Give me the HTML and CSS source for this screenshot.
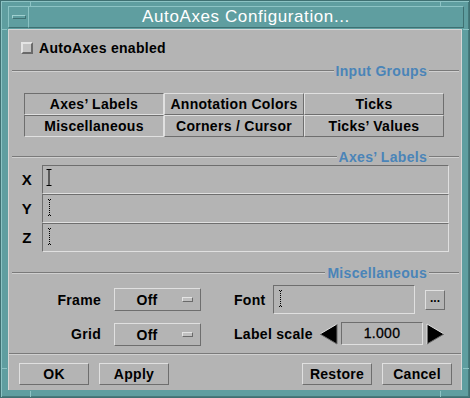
FILE: index.html
```html
<!DOCTYPE html>
<html>

<head>
    <meta charset="utf-8">
    <title>AutoAxes Configuration...</title>
    <link rel="stylesheet" href="styles.css">
</head>

<body>
    <div class="window">
        <span class="notch nt-l"></span>
        <span class="notch nt-r"></span>
        <span class="notch nb-l"></span>
        <span class="notch nb-r"></span>
        <span class="notch-h nl-t"></span>
        <span class="notch-h nr-t"></span>
        <span class="notch-h nl-b"></span>
        <span class="notch-h nr-b"></span>

        <div class="titlebar">
            <div class="menu-btn"><span></span></div>
            <div class="title">AutoAxes Configuration...</div>
        </div>

        <div class="body">
            <div class="main">
                <div class="check"><span class="box"></span>AutoAxes enabled</div>

                <div class="group-head"><span class="rule"></span><span class="caption">Input Groups</span><span class="rule end"></span></div>

                <div class="tabs">
                    <div class="tab sunk">Axes’ Labels</div>
                    <div class="tab">Annotation Colors</div>
                    <div class="tab">Ticks</div>
                    <div class="tab sunk">Miscellaneous</div>
                    <div class="tab">Corners / Cursor</div>
                    <div class="tab">Ticks’ Values</div>
                </div>

                <div class="group-head"><span class="rule"></span><span class="caption">Axes’ Labels</span><span class="rule end"></span></div>

                <div class="fields">
                    <div class="field-row">
                        <span class="axis">X</span>
                        <div class="field">
                            <svg class="ibeam" width="6" height="17" viewBox="0 0 6 17">
                                <path d="M0.5 0.5h5M3 0.5v16M0.5 16.5h5" stroke="#000" stroke-width="1" fill="none" />
                            </svg>
                        </div>
                    </div>
                    <div class="field-row">
                        <span class="axis">Y</span>
                        <div class="field">
                            <svg class="dotbeam" width="5" height="17" viewBox="0 0 5 17">
                                <path d="M1 0.5h3M2.5 1v15M1 16.5h3" stroke="#000" stroke-width="1" stroke-dasharray="1 1" fill="none" />
                            </svg>
                        </div>
                    </div>
                    <div class="field-row">
                        <span class="axis">Z</span>
                        <div class="field">
                            <svg class="dotbeam" width="5" height="17" viewBox="0 0 5 17">
                                <path d="M1 0.5h3M2.5 1v15M1 16.5h3" stroke="#000" stroke-width="1" stroke-dasharray="1 1" fill="none" />
                            </svg>
                        </div>
                    </div>
                </div>

                <div class="group-head"><span class="rule"></span><span class="caption">Miscellaneous</span><span class="rule end"></span></div>

                <div class="misc-row first">
                    <span class="misc-label">Frame</span>
                    <div class="option"><span class="opt-text">Off</span><span class="opt-mark"></span></div>
                    <span class="label2 font-label">Font</span>
                    <div class="font-field">
                        <svg class="dotbeam" width="5" height="17" viewBox="0 0 5 17">
                            <path d="M1 0.5h3M2.5 1v15M1 16.5h3" stroke="#000" stroke-width="1" stroke-dasharray="1 1" fill="none" />
                        </svg>
                    </div>
                    <div class="dots">...</div>
                </div>

                <div class="misc-row second">
                    <span class="misc-label">Grid</span>
                    <div class="option"><span class="opt-text">Off</span><span class="opt-mark"></span></div>
                    <span class="label2 scale-label">Label scale</span>
                    <svg class="arrow" width="19" height="22" viewBox="0 0 19 22">
                        <polygon points="18,1 1,11 18,21" fill="#000" />
                        <path d="M18 1L1 11" stroke="#e2e2e2" stroke-width="1" fill="none" />
                        <path d="M1 11L18 21V1" stroke="#6a6a6a" stroke-width="1" fill="none" />
                    </svg>
                    <div class="scale-field">1.000</div>
                    <svg class="arrow" width="19" height="22" viewBox="0 0 19 22">
                        <polygon points="1,1 18,11 1,21" fill="#000" />
                        <path d="M1 21V1L18 11" stroke="#e2e2e2" stroke-width="1" fill="none" />
                        <path d="M18 11L1 21" stroke="#6a6a6a" stroke-width="1" fill="none" />
                    </svg>
                </div>
            </div>

            <div class="actions">
                <div class="left-btns">
                    <div class="button">OK</div>
                    <div class="button">Apply</div>
                </div>
                <div class="right-btns">
                    <div class="button">Restore</div>
                    <div class="button">Cancel</div>
                </div>
            </div>
        </div>
    </div>
</body>

</html>
```

FILE: styles.css
```css
* {
    margin: 0px;
    padding: 0px;
    box-sizing: border-box;
}

body {
    font-family: "Liberation Sans", Arial, sans-serif;
    background: #5f9ea0;
}

.window {
    position: relative;
    width: 470px;
    height: 398px;
    background: #5f9ea0;
    border: 1px solid #3f7072;
    box-shadow: inset 1px 1px 0 #8cc3c4, inset -1px -1px 0 #477a7c;
    padding: 5px 5px 7px 7px;
    display: flex;
    flex-direction: column;
}

/* little resize-handle marks in the frame */
.notch {
    position: absolute;
    width: 1px;
    height: 6px;
    background: #8cc3c4;
}

.nt-l { left: 29px; top: 0px; }
.nt-r { left: 439px; top: 0px; }
.nb-l { left: 29px; bottom: 0px; }
.nb-r { left: 439px; bottom: 0px; }

.notch-h {
    position: absolute;
    width: 6px;
    height: 1px;
    background: #8cc3c4;
}

.nl-t { left: 0px; top: 28px; }
.nr-t { right: 0px; top: 28px; }
.nl-b { left: 0px; top: 367px; }
.nr-b { right: 0px; top: 367px; }

.titlebar {
    display: flex;
    height: 22px;
    margin-bottom: 1px;
}

.menu-btn {
    width: 21px;
    height: 22px;
    border-top: 1px solid #8cc3c4;
    border-left: 1px solid #8cc3c4;
    border-right: 1px solid #8cc3c4;
    border-bottom: 1px solid #3f7072;
    display: flex;
    align-items: center;
    justify-content: center;
}

.menu-btn span {
    display: block;
    width: 14px;
    height: 4px;
    border-top: 1px solid #9fd0d0;
    border-left: 1px solid #9fd0d0;
    border-bottom: 1px solid #3f7072;
    border-right: 1px solid #3f7072;
}

.title {
    flex: 1;
    border-top: 1px solid #8cc3c4;
    border-bottom: 1px solid #3f7072;
    border-right: 1px solid #3f7072;
    color: #ffffff;
    font-size: 17px;
    line-height: 20px;
    text-align: center;
    letter-spacing: 0.6px;
}

.body {
    flex: 1;
    margin-right: 2px;
    background: #b4b4b4;
    border-left: 1px solid #d6d6d6;
    border-top: 1px solid #d6d6d6;
    border-right: 1px solid #d6d6d6;
    display: flex;
    flex-direction: column;
    font-weight: bold;
    font-size: 14px;
    letter-spacing: 0.3px;
    color: #000;
}

.main {
    flex: 1;
    padding: 0px 2px 0px 3px;
}

.check {
    display: flex;
    align-items: center;
    height: 16px;
    margin-top: 10px;
    margin-left: 9px;
    font-size: 14px;
}

.box {
    width: 12px;
    height: 12px;
    margin-right: 6px;
    background: #c4c4c4;
    border-top: 2px solid #e4e4e4;
    border-left: 2px solid #e4e4e4;
    border-bottom: 2px solid #6a6a6a;
    border-right: 2px solid #6a6a6a;
}

.group-head {
    display: flex;
    align-items: center;
    height: 16px;
    margin-top: 7px;
}

.rule {
    flex: 1;
    height: 2px;
    border-top: 1px solid #7a7a7a;
    border-bottom: 1px solid #d0d0d0;
}

.rule.end {
    flex: none;
    width: 30px;
}

.caption {
    color: #4a84b8;
    padding: 0px 2px;
}

.tabs {
    display: grid;
    grid-template-columns: 140px 140px 140px;
    grid-template-rows: 22px 22px;
    margin: 14px 0px 12px 12px;
    width: 420px;
}

.tab {
    border-top: 1px solid #e0e0e0;
    border-left: 1px solid #e0e0e0;
    border-bottom: 1px solid #6e6e6e;
    border-right: 1px solid #6e6e6e;
    text-align: center;
    font-size: 14px;
    line-height: 20px;
}

.tab.sunk {
    border-top: 1px solid #6e6e6e;
    border-left: 1px solid #6e6e6e;
    border-bottom: 1px solid #e0e0e0;
    border-right: 1px solid #e0e0e0;
}

.fields {
    display: flex;
    flex-direction: column;
}

.field-row {
    display: flex;
    height: 29px;
}

.axis {
    width: 30px;
    text-align: center;
    line-height: 29px;
    font-size: 15px;
}

.field {
    width: 407px;
    border-top: 1px solid #6e6e6e;
    border-left: 1px solid #6e6e6e;
    border-bottom: 1px solid #e0e0e0;
    border-right: 1px solid #e0e0e0;
    display: flex;
    align-items: center;
    padding-left: 3px;
}

.ibeam {
    display: block;
    margin-top: -4px;
}

.dotbeam {
    display: block;
    margin-top: -2px;
    margin-left: 1px;
}

.fields + .group-head {
    margin-top: 13px;
}

.misc-row {
    display: flex;
    align-items: center;
}

.misc-row.first {
    height: 29px;
    margin-top: 4px;
}

.misc-row.second {
    height: 25px;
    margin-top: 7px;
}

.misc-label {
    width: 88px;
    text-align: right;
    margin-left: 1px;
}

.option {
    width: 87px;
    height: 23px;
    margin-left: 13px;
    border-top: 1px solid #e0e0e0;
    border-left: 1px solid #e0e0e0;
    border-bottom: 1px solid #6e6e6e;
    border-right: 1px solid #6e6e6e;
    display: flex;
    align-items: center;
}

.second .option {
    align-self: flex-end;
}

.opt-text {
    width: 64px;
    text-align: center;
}

.opt-mark {
    width: 11px;
    height: 5px;
    margin-left: 3px;
    background: #c0c0c0;
    border-top: 1px solid #e4e4e4;
    border-left: 1px solid #e4e4e4;
    border-bottom: 1px solid #6a6a6a;
    border-right: 1px solid #6a6a6a;
}

.label2 {
    margin-left: 33px;
}

.font-label {
    width: 39px;
}

.scale-label {
    width: 85px;
}

.font-field {
    width: 142px;
    height: 29px;
    border-top: 1px solid #6e6e6e;
    border-left: 1px solid #6e6e6e;
    border-bottom: 1px solid #e0e0e0;
    border-right: 1px solid #e0e0e0;
    display: flex;
    align-items: center;
    padding-left: 3px;
}

.dots {
    width: 20px;
    height: 20px;
    margin-left: 10px;
    border-top: 1px solid #e0e0e0;
    border-left: 1px solid #e0e0e0;
    border-bottom: 1px solid #6e6e6e;
    border-right: 1px solid #6e6e6e;
    text-align: center;
    font-size: 12px;
    line-height: 14px;
    letter-spacing: 0px;
}

.arrow {
    display: block;
}

.scale-field {
    width: 82px;
    height: 23px;
    margin: 0px 3px;
    border-top: 1px solid #6e6e6e;
    border-left: 1px solid #6e6e6e;
    border-bottom: 1px solid #e0e0e0;
    border-right: 1px solid #e0e0e0;
    text-align: center;
    line-height: 21px;
    font-weight: normal;
    -webkit-text-stroke: 0.3px #000;
}

.actions {
    height: 37px;
    border-top: 1px solid #7a7a7a;
    box-shadow: inset 0 1px 0 #d0d0d0;
    display: flex;
    justify-content: space-between;
    padding: 9px 9px 0px 10px;
}

.left-btns,
.right-btns {
    display: flex;
    gap: 10px;
}

.button {
    width: 70px;
    height: 22px;
    border-top: 1px solid #e0e0e0;
    border-left: 1px solid #e0e0e0;
    border-bottom: 1px solid #6e6e6e;
    border-right: 1px solid #6e6e6e;
    text-align: center;
    line-height: 20px;
}
```
